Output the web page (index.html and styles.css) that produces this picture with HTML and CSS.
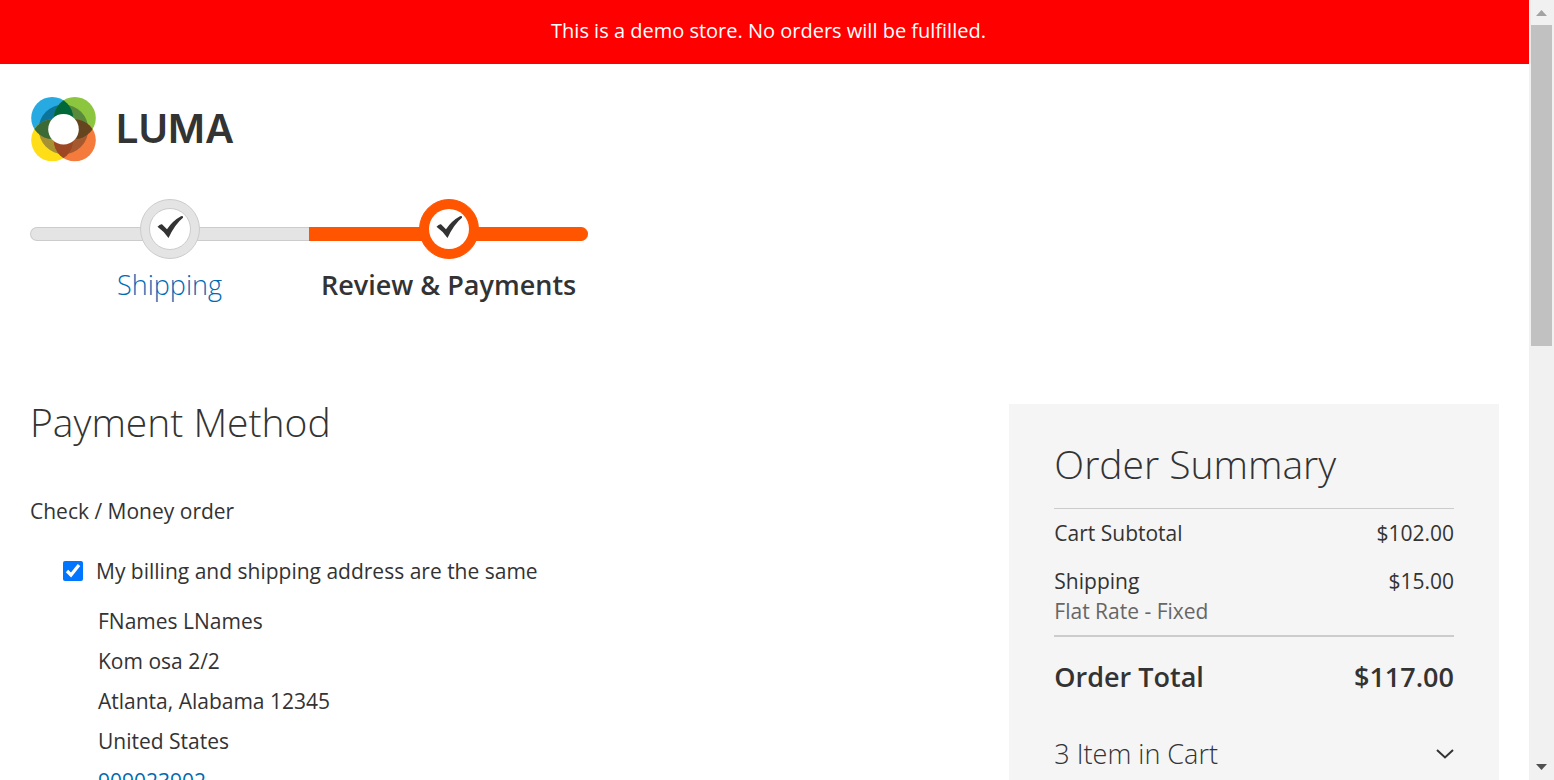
FILE: index.html
```html
<!DOCTYPE html>
<html lang="en">
<head>
<meta charset="utf-8">
<title>Checkout</title>
<link rel="stylesheet" href="styles.css">
</head>
<body>
<div class="viewport">
  <div class="page">
    <div class="demo-notice" role="status">This is a demo store. No orders will be fulfilled.</div>
    <header class="header">
      <a class="logo" href="#" aria-label="Luma home">
        <svg class="logo-mark" viewBox="-1 -1 66 66" aria-hidden="true">
          <defs>
            <clipPath id="tl"><circle cx="21.200" cy="21" r="21"/></clipPath>
            <clipPath id="tr"><circle cx="43.800" cy="21" r="21"/></clipPath>
            <clipPath id="bl"><circle cx="21.200" cy="43.300" r="21"/></clipPath>
            <clipPath id="br"><circle cx="43.800" cy="43.300" r="21"/></clipPath>
          </defs>
          <circle cx="21.200" cy="21" r="21" fill="#27a9e1"/>
          <circle cx="43.800" cy="21" r="21" fill="#8cc63f"/>
          <circle cx="21.200" cy="43.300" r="21" fill="#ffde17"/>
          <circle cx="43.800" cy="43.300" r="21" fill="#f47b3c"/>
          <circle cx="32.500" cy="32.300" r="24.800" fill="#0a749b" clip-path="url(#tl)"/>
          <circle cx="32.500" cy="32.300" r="24.800" fill="#598a3c" clip-path="url(#tr)"/>
          <circle cx="32.500" cy="32.300" r="24.800" fill="#a69133" clip-path="url(#bl)"/>
          <circle cx="32.500" cy="32.300" r="24.800" fill="#a6592f" clip-path="url(#br)"/>
          <g clip-path="url(#tl)"><circle cx="43.800" cy="21" r="21" fill="#006838"/><circle cx="21.200" cy="43.300" r="21" fill="#3b6a34"/></g>
          <g clip-path="url(#br)"><circle cx="43.800" cy="21" r="21" fill="#64451f"/><circle cx="21.200" cy="43.300" r="21" fill="#9e4823"/></g>
          <circle cx="32.500" cy="32.300" r="15.300" fill="#fff"/>
        </svg>
        <span class="logo-name">LUMA</span>
      </a>
    </header>

    <ol class="progress">
      <li class="step step-done">
        <span class="step-badge"><svg class="tick" viewBox="0 0 26 22" aria-hidden="true"><path d="M0.500 10.800Q3 7.700 5 8.200L10 13.200Q16 4.500 24 0.300Q26.500 -0.500 26 1.700Q18 8 11.500 22Q6.500 15 0.500 10.800z"/></svg></span>
        <a class="step-label" href="#">Shipping</a>
      </li>
      <li class="step step-active" aria-current="step">
        <span class="step-badge"><svg class="tick" viewBox="0 0 26 22" aria-hidden="true"><path d="M0.500 10.800Q3 7.700 5 8.200L10 13.200Q16 4.500 24 0.300Q26.500 -0.500 26 1.700Q18 8 11.500 22Q6.500 15 0.500 10.800z"/></svg></span>
        <span class="step-label">Review &amp; Payments</span>
      </li>
    </ol>

    <main class="checkout">
      <section class="payment">
        <h1 class="heading">Payment Method</h1>
        <h2 class="method">Check / Money order</h2>
        <div class="same-address">
          <input class="checkbox" type="checkbox" id="same" checked>
          <label for="same">My billing and shipping address are the same</label>
        </div>
        <address class="address">
          <span>FNames LNames</span>
          <span>Kom osa 2/2</span>
          <span>Atlanta, Alabama 12345</span>
          <span>United States</span>
          <a href="tel:909023902">909023902</a>
        </address>
      </section>

      <aside class="summary">
        <h2 class="heading">Order Summary</h2>
        <table class="totals">
          <tbody>
            <tr><th scope="row">Cart Subtotal</th><td>$102.00</td></tr>
            <tr><th scope="row">Shipping<span class="note">Flat Rate - Fixed</span></th><td>$15.00</td></tr>
          </tbody>
          <tfoot>
            <tr class="grand"><th scope="row">Order Total</th><td>$117.00</td></tr>
          </tfoot>
        </table>
        <button class="cart-toggle" type="button" aria-expanded="false">
          3 Item in Cart
          <svg class="chevron" viewBox="0 0 18 10" aria-hidden="true"><path d="M1 1l8 7.500L17 1"/></svg>
        </button>
      </aside>
    </main>
  </div>

  <div class="scrollbar" aria-hidden="true">
    <svg class="arrow" viewBox="0 0 11 6"><path d="M0 6L5.500 0L11 6z" fill="#a3a3a3"/></svg>
    <div class="track"><div class="thumb"></div></div>
    <svg class="arrow" viewBox="0 0 11 6"><path d="M0 0L5.500 6L11 0z" fill="#505050"/></svg>
  </div>
</div>
</body>
</html>
```
FILE: styles.css
```css
*, *::before { box-sizing: border-box; }
body {
  margin: 0;
  background: #fff;
  color: #333;
  font: 400 21px/30px "Open Sans", "Noto Sans", sans-serif;
}
a { color: #006bb4; text-decoration: none; }
h1, h2, ol { margin: 0; padding: 0; }

.viewport { display: flex; height: 100vh; overflow: hidden; }
.page { flex: 1; min-width: 0; overflow: hidden; }

.demo-notice {
  padding: 16px 24px 18px 32px;
  background: #f00;
  color: #fff;
  font-size: 20px;
  text-align: center;
}

.header { padding: 32px 30px 0; }
.logo { display: inline-flex; align-items: center; gap: 20px; color: #333; }
.logo-mark { display: block; width: 66px; height: 66px; }
.logo-name { font: 600 40px/48px Inter, sans-serif; }

.progress {
  display: flex;
  width: 36.5%;
  margin: 30px 30px 0;
  list-style: none;
}
.step {
  position: relative;
  flex: 1 1 0;
  min-width: 0;
  display: flex;
  flex-direction: column;
  align-items: center;
  gap: 11px;
  font-size: 27px;
}
.step::before {
  content: "";
  position: absolute;
  top: 28px;
  left: 0;
  right: 0;
  height: 14px;
  background: #e4e4e4;
  border: 1px solid #ccc;
  border-right: 0;
  border-radius: 7px 0 0 7px;
}
.step-badge {
  position: relative;
  display: grid;
  place-items: center;
  width: 60px;
  height: 60px;
  border: 1px solid #ccc;
  border-radius: 50%;
  background: #e4e4e4;
}
.step-badge::before {
  content: "";
  grid-area: 1 / 1;
  width: 42px;
  height: 42px;
  border: 1px solid #ccc;
  border-radius: 50%;
  background: #fff;
}
.tick { position: relative; grid-area: 1 / 1; width: 26px; height: 22px; margin-bottom: 4px; fill: #333; }
.step-label { font-weight: 300; white-space: nowrap; }
.step-active::before { background: #ff5501; border-color: #ff5501; border-radius: 0 7px 7px 0; }
.step-active .step-badge { background: #ff5501; border-color: #ff5501; }
.step-active .step-badge::before { width: 40px; height: 40px; border: 0; }
.step-active .step-label { font-weight: 600; }

.checkout {
  display: flex;
  align-items: flex-start;
  justify-content: space-between;
  margin: 100px 30px 0;
}
.heading { font-size: 39px; line-height: 44px; font-weight: 300; }
.method { margin-top: 52px; font-size: 21px; font-weight: 400; }
.same-address { display: flex; align-items: center; gap: 13px; margin: 30px 0 15px 33px; }
.checkbox { width: 20px; height: 20px; margin: 0; accent-color: #0075ff; }
.address {
  display: flex;
  flex-direction: column;
  align-items: flex-start;
  margin-left: 68px;
  line-height: 40px;
  font-style: normal;
}

.summary { width: 33.333%; margin-top: 4px; padding: 38px 45px; background: #f5f5f5; }
.totals { width: 100%; margin-top: 22px; border-collapse: collapse; }
.totals th, .totals td { padding: 9px 0; font-weight: 400; text-align: left; vertical-align: top; }
.totals td { text-align: right; }
.totals tbody { border-top: 1px solid #ccc; }
.totals tfoot { border-top: 2px solid #ccc; }
.totals .note { display: block; color: #666; }
.totals .grand th, .totals .grand td { padding: 25px 0; font-size: 27px; font-weight: 600; }
.cart-toggle {
  display: flex;
  align-items: center;
  justify-content: space-between;
  width: 100%;
  margin-top: 22px;
  padding: 0;
  border: 0;
  background: none;
  color: #333;
  font: inherit;
  font-size: 27px;
  font-weight: 300;
}
.chevron { width: 18px; height: 10px; fill: none; stroke: #333; stroke-width: 2; }

.scrollbar {
  display: flex;
  flex-direction: column;
  align-items: center;
  gap: 9px;
  width: 25px;
  padding: 10px 2px;
  background: #f1f1f1;
}
.arrow { width: 11px; height: 6px; flex: none; }
.track { flex: 1; width: 100%; }
.thumb { height: 44%; background: #c1c1c1; }
```
